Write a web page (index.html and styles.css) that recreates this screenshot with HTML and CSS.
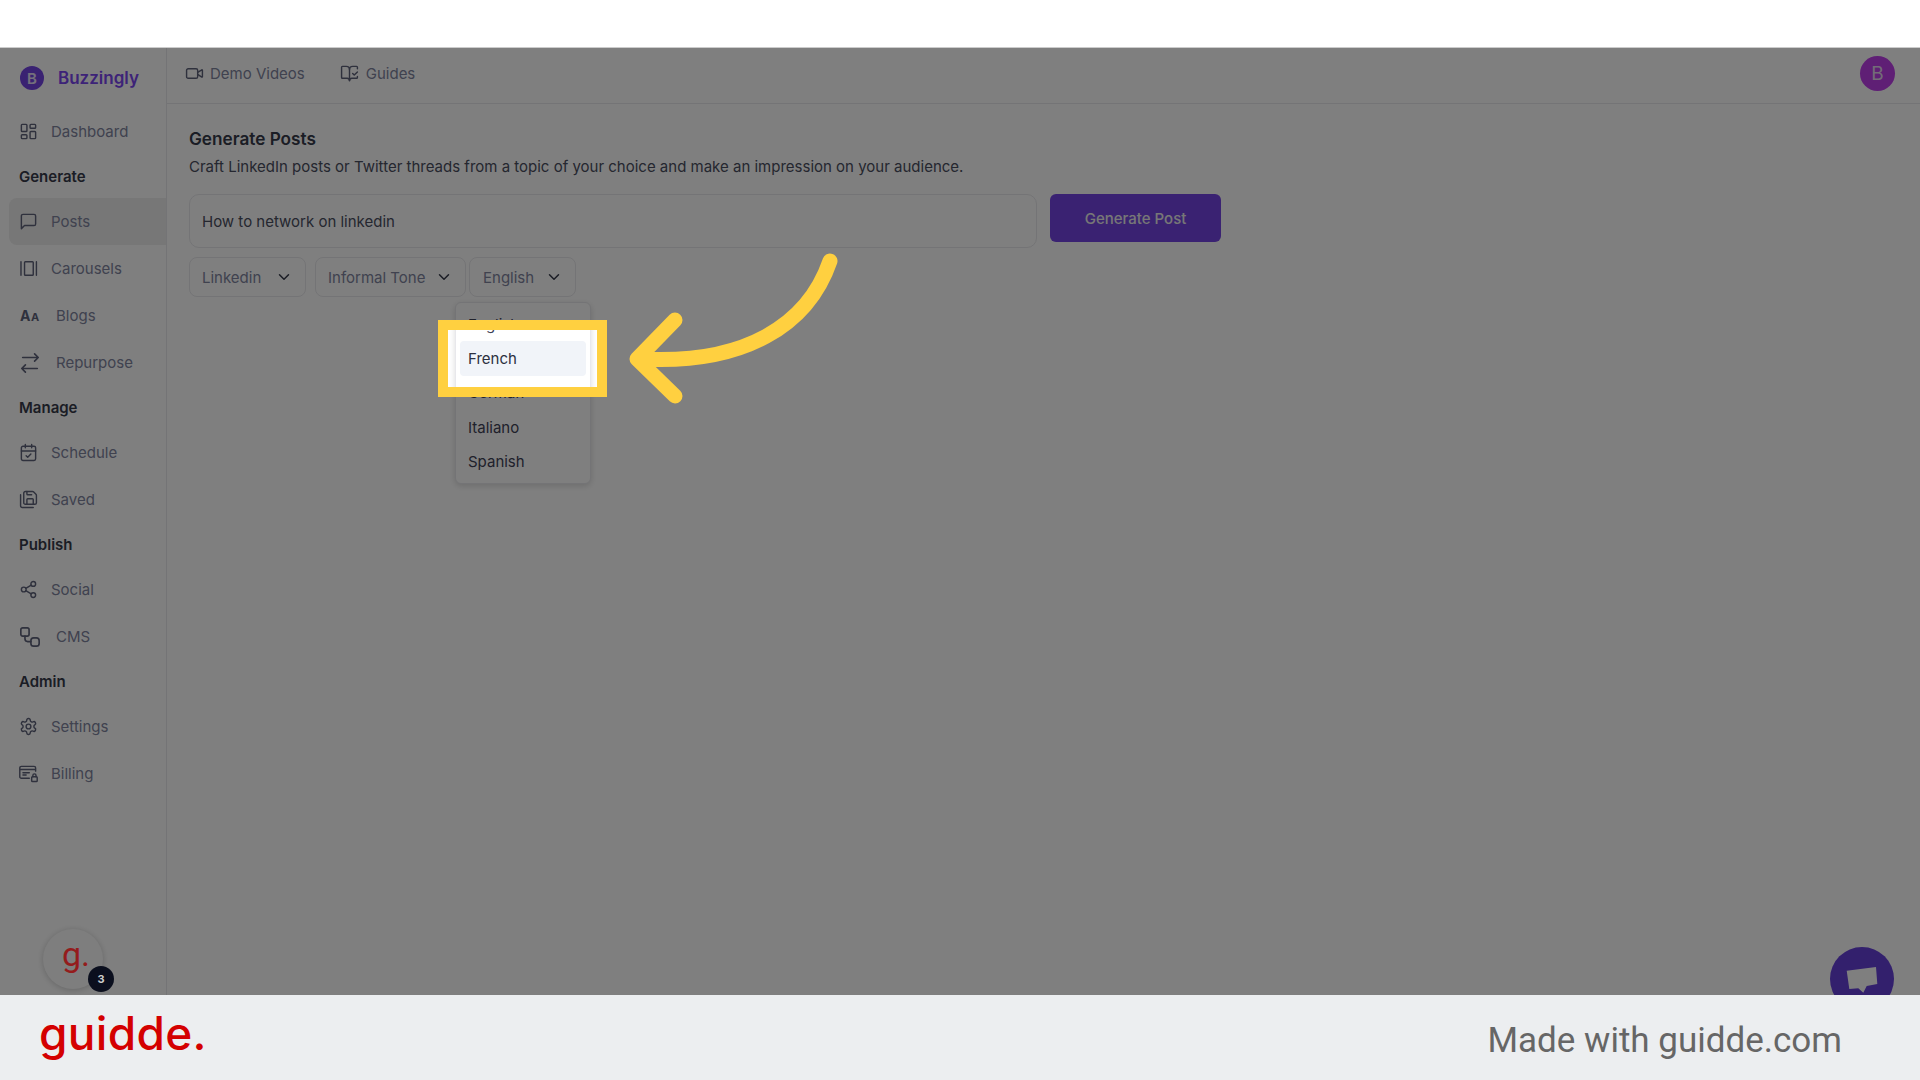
FILE: index.html
```html
<!DOCTYPE html>
<html lang="en">
<head>
<meta charset="utf-8">
<title>Buzzingly - Generate Posts</title>
<link rel="stylesheet" href="styles.css">
</head>
<body>
<div class="topstrip"></div>
<div class="app">
  <aside class="sidebar">
    <div class="brand"><span class="brand-mark">B</span><span class="brand-name">Buzzingly</span></div>
    <a class="item"><svg class="ic" viewBox="0 0 24 24"><rect x="3" y="3" width="7" height="9" rx="1"/><rect x="14" y="3" width="7" height="5" rx="1"/><rect x="14" y="12" width="7" height="9" rx="1"/><rect x="3" y="16" width="7" height="5" rx="1"/></svg><span>Dashboard</span></a>
    <div class="section">Generate</div>
    <a class="item active"><svg class="ic" viewBox="0 0 24 24"><path d="M21 15a2 2 0 0 1-2 2H7l-4 4V5a2 2 0 0 1 2-2h14a2 2 0 0 1 2 2z"/></svg><span>Posts</span></a>
    <a class="item"><svg class="ic" viewBox="0 0 24 24"><rect x="7" y="3.5" width="11" height="17" rx="1"/><path d="M2.500 3.500v17M22 3.500v17"/></svg><span>Carousels</span></a>
    <a class="item wide"><span class="aa">A<small>A</small></span><span>Blogs</span></a>
    <a class="item wide"><svg class="ic big" viewBox="0 0 24 24"><path d="m17 2 4 4-4 4M21 6H4M7 22l-4-4 4-4M3 18h17"/></svg><span>Repurpose</span></a>
    <div class="section">Manage</div>
    <a class="item"><svg class="ic" viewBox="0 0 24 24"><path d="M8 2v4M16 2v4M3 10h18M9 16l2 2 4-4"/><rect x="3" y="4" width="18" height="18" rx="2"/></svg><span>Schedule</span></a>
    <a class="item"><svg class="ic" viewBox="0 0 24 24"><path d="M10 2v3a1 1 0 0 0 1 1h5"/><path d="M18 18v-6a1 1 0 0 0-1-1h-6a1 1 0 0 0-1 1v6"/><path d="M18 22H4a2 2 0 0 1-2-2V6"/><path d="M8 18a2 2 0 0 1-2-2V4a2 2 0 0 1 2-2h9.172a2 2 0 0 1 1.414.586l2.828 2.828A2 2 0 0 1 22 6.828V16a2 2 0 0 1-2 2z"/></svg><span>Saved</span></a>
    <div class="section">Publish</div>
    <a class="item"><svg class="ic" viewBox="0 0 24 24"><circle cx="18" cy="5" r="3"/><circle cx="6" cy="12" r="3"/><circle cx="18" cy="19" r="3"/><path d="m8.600 13.500 6.800 4M15.400 6.500l-6.800 4"/></svg><span>Social</span></a>
    <a class="item wide"><svg class="ic big" viewBox="0 0 24 24"><rect x="2" y="2" width="9" height="9" rx="2"/><rect x="13" y="13" width="9" height="9" rx="3"/><path d="M6.500 11v3a3 3 0 0 0 3 3H13"/></svg><span>CMS</span></a>
    <div class="section">Admin</div>
    <a class="item"><svg class="ic" viewBox="0 0 24 24"><path d="M12.220 2h-.44a2 2 0 0 0-2 2v.18a2 2 0 0 1-1 1.730l-.43.25a2 2 0 0 1-2 0l-.15-.08a2 2 0 0 0-2.730.73l-.22.38a2 2 0 0 0 .73 2.730l.15.1a2 2 0 0 1 1 1.720v.51a2 2 0 0 1-1 1.740l-.15.09a2 2 0 0 0-.73 2.730l.22.38a2 2 0 0 0 2.730.73l.15-.08a2 2 0 0 1 2 0l.43.25a2 2 0 0 1 1 1.730V20a2 2 0 0 0 2 2h.44a2 2 0 0 0 2-2v-.18a2 2 0 0 1 1-1.730l.43-.25a2 2 0 0 1 2 0l.15.08a2 2 0 0 0 2.730-.73l.22-.39a2 2 0 0 0-.73-2.730l-.15-.08a2 2 0 0 1-1-1.740v-.5a2 2 0 0 1 1-1.740l.15-.09a2 2 0 0 0 .73-2.730l-.22-.38a2 2 0 0 0-2.730-.73l-.15.08a2 2 0 0 1-2 0l-.43-.25a2 2 0 0 1-1-1.730V4a2 2 0 0 0-2-2z"/><circle cx="12" cy="12" r="3"/></svg><span>Settings</span></a>
    <a class="item"><svg class="ic" viewBox="0 0 24 24"><path d="M13 18H3a2 2 0 0 1-2-2V5a2 2 0 0 1 2-2h16a2 2 0 0 1 2 2v4M1 7h20M5 11h8M5 14h4"/><rect x="16" y="16" width="7" height="6" rx="1"/><path d="M17.500 16v-1.500a2 2 0 0 1 4 0V16"/></svg><span>Billing</span></a>
  </aside>
  <main class="main">
    <header class="topbar">
      <a class="toplink"><svg class="ic" viewBox="0 0 24 24"><path d="m16 13 5.223 3.482a.5.5 0 0 0 .777-.416V7.870a.5.5 0 0 0-.752-.432L16 10.500"/><rect x="2" y="6" width="14" height="12" rx="2"/></svg><span>Demo Videos</span></a>
      <a class="toplink"><svg class="ic" viewBox="0 0 24 24"><path d="M12 21V7M16 12l2 2 4-4"/><path d="M22 6V4a1 1 0 0 0-1-1h-5a4 4 0 0 0-4 4 4 4 0 0 0-4-4H3a1 1 0 0 0-1 1v13a1 1 0 0 0 1 1h6a3 3 0 0 1 3 3 3 3 0 0 1 3-3h6a1 1 0 0 0 1-1v-1.300"/></svg><span>Guides</span></a>
      <span class="avatar">B</span>
    </header>
    <section class="content">
      <h1 class="title">Generate Posts</h1>
      <p class="desc">Craft LinkedIn posts or Twitter threads from a topic of your choice and make an impression on your audience.</p>
      <div class="form-row">
        <div class="input">How to network on linkedin</div>
        <button class="primary">Generate Post</button>
      </div>
      <div class="select-row">
        <div class="select s1"><span>Linkedin</span><svg class="chev" viewBox="0 0 24 24"><path d="m6 9 6 6 6-6"/></svg></div>
        <div class="select s2"><span>Informal Tone</span><svg class="chev" viewBox="0 0 24 24"><path d="m6 9 6 6 6-6"/></svg></div>
        <div class="select s3"><span>English</span><svg class="chev" viewBox="0 0 24 24"><path d="m6 9 6 6 6-6"/></svg></div>
      </div>
    </section>
  </main>
  <ul class="menu">
    <li>English</li>
    <li class="hover">French</li>
    <li>German</li>
    <li>Italiano</li>
    <li>Spanish</li>
  </ul>
  <div class="chat"><svg viewBox="0 0 64 64"><polygon points="16.700,23.700 46,20 47.300,37 36.700,39 33.300,45.700 28.300,41.300 19.300,42"/></svg></div>
  <div class="widget"></div>
  <div class="spot"></div>
  <span class="widget-g">g.</span>
  <span class="badge">3</span>
  <svg class="arrow" viewBox="0 0 240 160"><path d="M210 11C188 75 125 115 20 109M55 70 17 109 55 146"/></svg>
</div>
<footer class="footer">
  <span class="logo">guidde.</span>
  <span class="made">Made with guidde.com</span>
</footer>
</body>
</html>
```
FILE: styles.css
```css
* { box-sizing: border-box; }
html, body { margin: 0; height: 100%; }
body {
  width: 1920px;
  height: 1080px;
  overflow: hidden;
  display: flex;
  flex-direction: column;
  font-family: Inter, "Liberation Sans", sans-serif;
  background: #fff;
  color: #80849e;
}
.topstrip { height: 48px; flex: none; background: #fff; border-bottom: 1px solid #ccc; }
.app { position: relative; flex: none; height: 947px; display: flex; overflow: hidden; background: #fff; }

.sidebar { width: 167px; flex: none; border-right: 1px solid #e8e8ec; display: flex; flex-direction: column; }
.brand { height: 60px; flex: none; display: flex; align-items: center; padding: 0 0 0 20px; gap: 14px; }
.brand-mark { width: 24px; height: 24px; border-radius: 50%; background: #7444e4; color: #e8e0f8; display: flex; align-items: center; justify-content: center; font-size: 15px; font-weight: 600; }
.brand-name { font-size: 17px; font-weight: 600; color: #7a46f0; }
.item { height: 47px; flex: none; margin-left: 9px; padding-left: 10px; display: flex; align-items: center; gap: 13.500px; font-size: 15px; color: #80849e; border-radius: 8px 0 0 8px; }
.item.active { background: #eeeeee; }
.item.wide { gap: 15px; }
.section { height: 43px; flex: none; padding-left: 19px; display: flex; align-items: center; font-size: 15px; font-weight: 600; color: #363a4a; }
.ic { width: 19px; height: 19px; margin-left: -.5px; flex: none; fill: none; stroke: #5e627a; stroke-width: 1.800; stroke-linecap: round; stroke-linejoin: round; }
.ic.big { width: 22px; height: 22px; margin-left: 0; }
.aa { width: 22px; flex: none; padding-left: 1px; font-size: 14px; font-weight: 700; letter-spacing: .5px; line-height: 1; color: #5e627a; }
.aa small { font-size: 11px; }

.main { flex: 1; min-width: 0; display: flex; flex-direction: column; }
.topbar { height: 56px; flex: none; display: flex; align-items: center; padding: 0 25px 4px 18px; gap: 36px; border-bottom: 1px solid #e8e8ec; }
.toplink { display: flex; align-items: center; gap: 6.500px; font-size: 15px; color: #80849e; }
.avatar { margin: 0 0 1px auto; width: 35px; height: 35px; border-radius: 50%; background: #be3eea; color: #e6d8ee; display: flex; align-items: center; justify-content: center; font-size: 19px; }

.content { padding: 24px 0 0 22px; }
.title { margin: 0; font-size: 17.200px; line-height: 22px; font-weight: 600; color: #363a4a; }
.desc { margin: 6px 0 0; font-size: 15px; line-height: 22px; color: #4a4e60; }
.form-row { display: flex; gap: 13px; margin-top: 16px; align-items: flex-start; }
.input { width: 848px; height: 54px; border: 1px solid #e8e8ec; border-radius: 10px; padding: 1px 12px 0; display: flex; align-items: center; font-size: 15px; color: #4a4e60; }
.primary { width: 171px; height: 48px; border: 0; border-radius: 6px; background: #7444e4; color: #eee; font: 500 15px Inter, sans-serif; }
.select-row { display: flex; margin-top: 9px; }
.select { height: 40px; border: 1px solid #e8e8ec; border-radius: 8px; display: flex; align-items: center; justify-content: space-between; padding: 0 12px; font-size: 15px; color: #80849e; }
.s1 { width: 117px; margin-right: 9px; }
.s2 { width: 151px; margin-right: 3px; }
.s3 { width: 107px; padding-left: 13px; }
.chev { width: 18px; height: 18px; flex: none; fill: none; stroke: #363a4a; stroke-width: 2; stroke-linecap: round; stroke-linejoin: round; }

.menu { position: absolute; left: 455px; top: 254px; width: 136px; margin: 0; padding: 4px; list-style: none; background: #fff; border: 1px solid #e8e8ec; border-radius: 6px; box-shadow: 0 2px 6px rgba(0,0,0,.15); }
.menu li { height: 34.400px; padding-left: 8px; display: flex; align-items: center; border-radius: 4px; font-size: 15px; color: #3e4256; }
.menu li.hover { background: #f1f4f9; color: #2c3040; }

.chat { position: absolute; left: 1830px; top: 899px; width: 64px; height: 64px; border-radius: 50%; background: #6640da; }
.chat svg { display: block; width: 64px; height: 64px; fill: #fff; }
.widget { position: absolute; left: 43px; top: 881px; width: 60px; height: 60px; border-radius: 50%; background: #fcfcfc; box-shadow: 0 1px 6px rgba(0,0,0,.2); }
.widget-g { position: absolute; left: 62px; top: 889px; font-family: Roboto, sans-serif; font-size: 34px; line-height: 1; color: #941c1c; }
.badge { position: absolute; left: 88px; top: 918px; width: 26px; height: 26px; border-radius: 50%; background: #0b0f1e; color: #ccc; display: flex; align-items: center; justify-content: center; font-size: 11px; font-weight: 700; }

.spot { position: absolute; left: 438px; top: 272px; width: 169px; height: 77px; border: 10px solid #ffd040; box-shadow: 0 0 0 2500px rgba(0,0,0,.5); }
.arrow { position: absolute; left: 620px; top: 202px; width: 240px; height: 160px; fill: none; stroke: #ffd040; stroke-width: 15; stroke-linecap: round; stroke-linejoin: round; }

.footer { flex: 1; display: flex; align-items: center; justify-content: space-between; background: #eceef0; padding: 0 78px 0 39px; }
.logo { font-family: Inter, sans-serif; font-size: 46px; font-weight: 500; line-height: 1; letter-spacing: .3px; color: #d40000; margin-top: -9px; }
.made { font-family: Roboto, sans-serif; font-size: 35px; color: #666; margin-top: 6px; }
```
